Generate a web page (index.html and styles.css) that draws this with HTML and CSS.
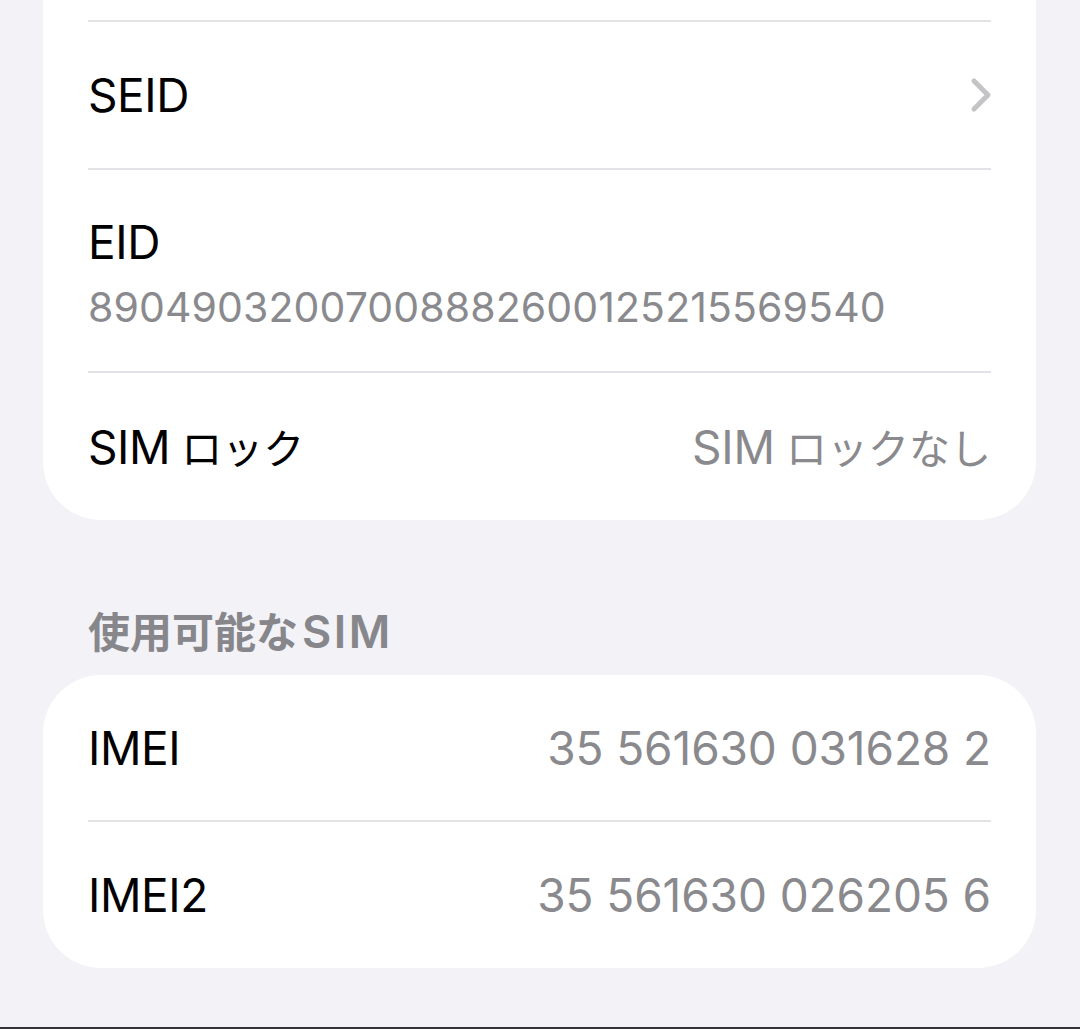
FILE: index.html
```html
<!DOCTYPE html>
<html lang="ja">
<head>
<meta charset="utf-8">
<link rel="stylesheet" href="styles.css">
</head>
<body>
<main class="page">
  <section class="card card-top">
    <div class="row row-stub"></div>
    <div class="row">
      <span class="label">SEID</span>
      <svg class="chevron" width="22" height="36" viewBox="0 0 22 36"><polyline points="4,4 18,18 4,32" fill="none" stroke="#c4c4c7" stroke-width="5" stroke-linecap="round" stroke-linejoin="round"/></svg>
    </div>
    <div class="row row-eid">
      <span class="label">EID</span>
      <span class="sub">89049032007008882600125215569540</span>
    </div>
    <div class="row row-last">
      <span class="label">SIM<span class="jp gap">ロック</span></span>
      <span class="value">SIM<span class="jp gap">ロックなし</span></span>
    </div>
  </section>

  <h2 class="section-title"><span class="jp">使用可能な</span><span class="title-latin">SIM</span></h2>

  <section class="card">
    <div class="row row-first">
      <span class="label">IMEI</span>
      <span class="value">35 561630 031628 2</span>
    </div>
    <div class="row row-last">
      <span class="label">IMEI2</span>
      <span class="value">35 561630 026205 6</span>
    </div>
  </section>
</main>
<div class="bottom-edge"></div>
</body>
</html>
```

FILE: styles.css
```css
html, body {
  margin: 0;
  padding: 0;
}
body {
  background: #f2f2f7;
  font-family: Inter, "Noto Sans CJK JP", sans-serif;
  height: 1029px;
  overflow: hidden;
  display: flex;
  flex-direction: column;
}
.page {
  flex: 1;
  padding: 0 44px 0 43px;
}
.card {
  background: #ffffff;
  border-radius: 58px;
  display: flex;
  flex-direction: column;
}
.card-top {
  border-radius: 0 0 58px 58px;
}
.row {
  margin: 0 45px;
  height: 146px;
  display: flex;
  align-items: center;
  justify-content: space-between;
  border-bottom: 2px solid #e3e3e7;
}
.row-stub {
  height: 20px;
}
.row-eid {
  height: auto;
  flex-direction: column;
  align-items: flex-start;
  justify-content: flex-start;
  padding: 44px 0 36px;
}
.row-first {
  height: 145px;
}
.row-last {
  border-bottom: none;
  height: 147px;
}
.card:not(.card-top) .row-last {
  height: 146px;
}
.label {
  font-size: 46px;
  line-height: 56px;
  color: #000;
  letter-spacing: -0.4px;
}
.value {
  font-size: 46px;
  line-height: 56px;
  color: #8a8a8e;
  letter-spacing: -0.1px;
}
.sub {
  font-size: 41px;
  line-height: 56px;
  color: #8a8a8e;
  margin-top: 9px;
  letter-spacing: 0.1px;
}
.jp {
  font-family: "Noto Sans CJK JP", sans-serif;
}
.label .jp, .value .jp {
  font-size: 41px;
  letter-spacing: 0;
}
.gap {
  margin-left: 11px;
}
.chevron {
  display: block;
  margin-right: -1px;
}
.section-title {
  margin: 0;
  padding: 86px 0 21px 45px;
  height: 48px;
  display: flex;
  align-items: baseline;
  font-size: 42px;
  line-height: 48px;
  font-weight: 600;
  color: #86868b;
}
.section-title .jp {
  font-size: 42px;
  line-height: 48px;
}
.title-latin {
  font-family: Inter, sans-serif;
  font-size: 45px;
  line-height: 48px;
  letter-spacing: 2.5px;
  margin-left: 4px;
}
.bottom-edge {
  height: 2px;
  background: #333335;
}
```
